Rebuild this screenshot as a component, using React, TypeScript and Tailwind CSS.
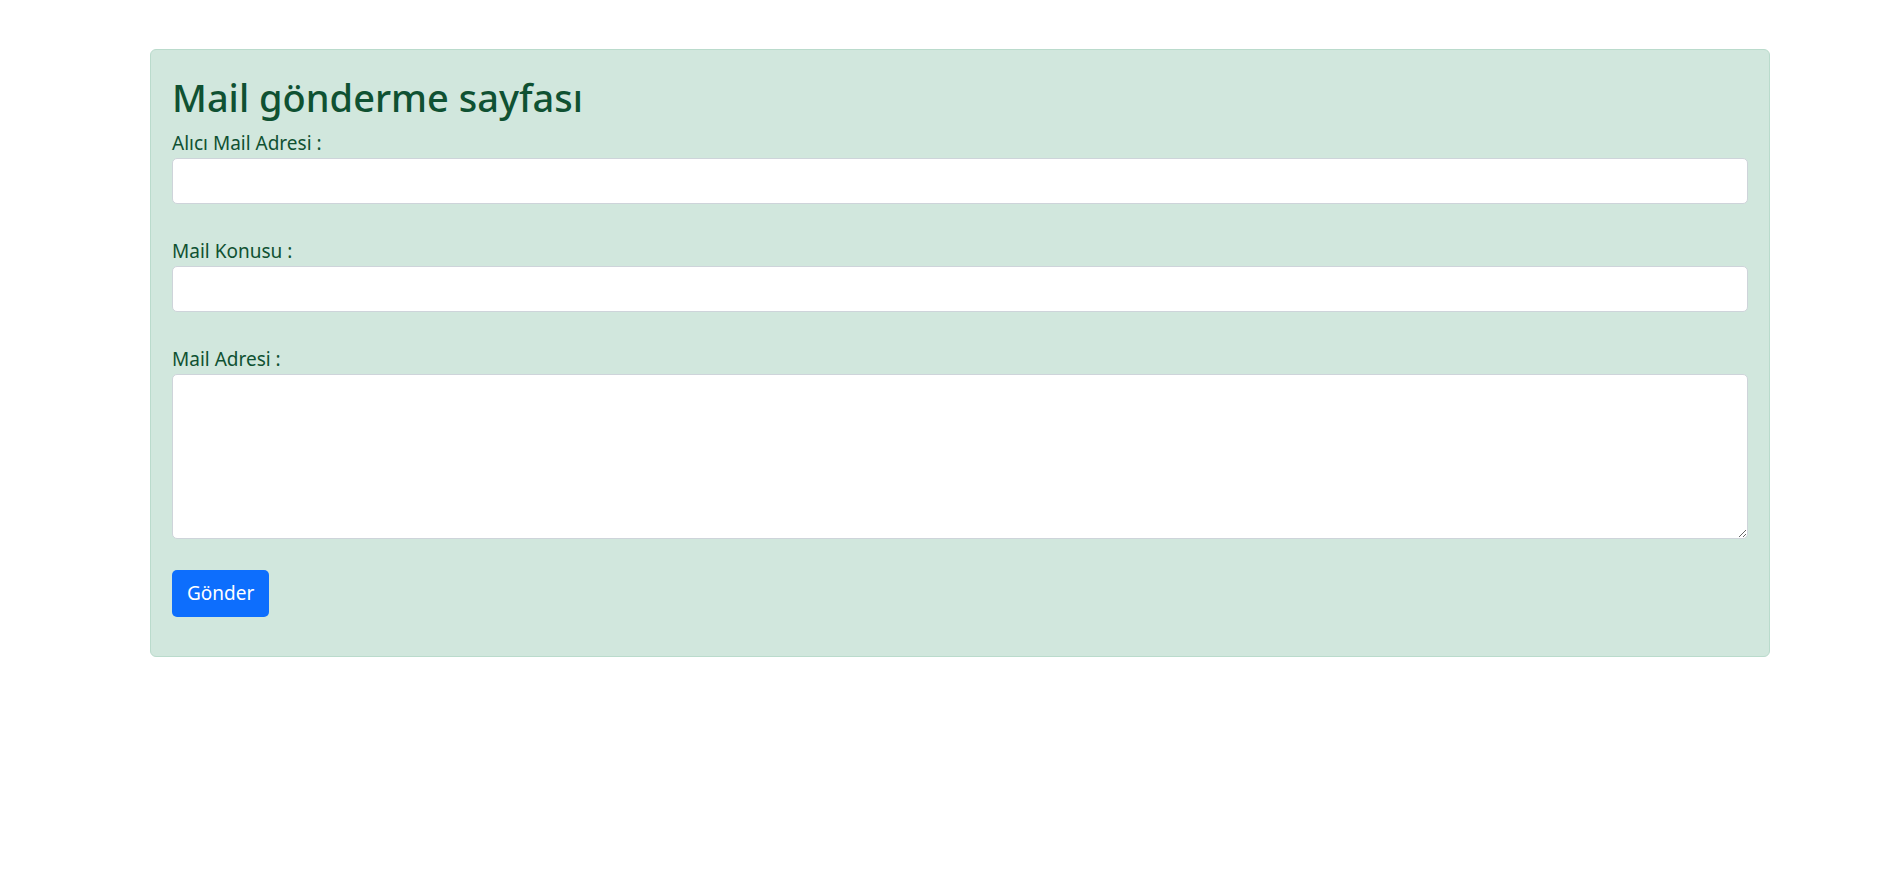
export default function App() {
  return (
    <div className="min-h-screen bg-white pt-[49px] font-['Noto_Sans',sans-serif]">
      <div className="ml-[150px] w-[1620px] rounded-[6px] border border-[#badbcc] bg-[#d1e7dd] px-[21px] pt-[24px] pb-[39px] text-[#0f5132]">
        <h2 className="mb-[9px] text-[38px] leading-[46px] font-medium">Mail gönderme sayfası</h2>
        <form className="flex flex-col" onSubmit={(e) => e.preventDefault()}>
          <label className="text-[19px] leading-[29px]">Alıcı Mail Adresi :</label>
          <input
            type="text"
            className="h-[46px] w-full rounded-[5px] border border-[#ced4da] bg-white px-[14px] text-[19px] text-[#212529] outline-none"
          />
          <label className="mt-[33px] text-[19px] leading-[29px]">Mail Konusu :</label>
          <input
            type="text"
            className="h-[46px] w-full rounded-[5px] border border-[#ced4da] bg-white px-[14px] text-[19px] text-[#212529] outline-none"
          />
          <label className="mt-[33px] text-[19px] leading-[29px]">Mail Adresi :</label>
          <textarea className="h-[165px] w-full rounded-[5px] border border-[#ced4da] bg-white px-[14px] py-[7px] text-[19px] text-[#212529] outline-none" />
          <div className="mt-[31px]">
            <button
              type="submit"
              className="h-[47px] rounded-[5px] bg-[#0d6efd] px-[15px] text-[19px] text-white"
            >
              Gönder
            </button>
          </div>
        </form>
      </div>
    </div>
  );
}
